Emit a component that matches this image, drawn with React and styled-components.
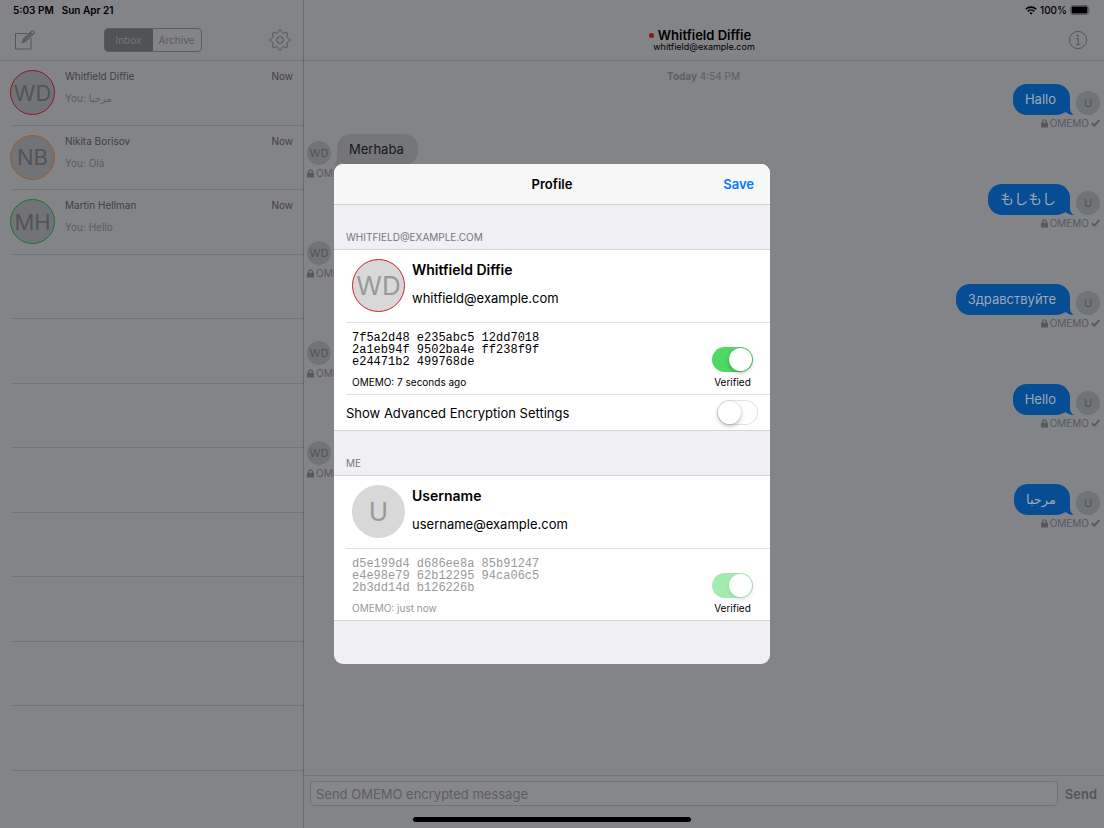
import React from "react";
import styled, { createGlobalStyle, css } from "styled-components";

const sans = `Inter, "Noto Sans CJK JP", "DejaVu Sans", sans-serif`;

const GlobalStyle = createGlobalStyle`
  * { box-sizing: border-box; }
  html, body { height: 100%; margin: 0; }
  #root { height: 100%; }
  body { font-family: ${sans}; background: #838488; color: #000; overflow: hidden; }
  button, input { font-family: inherit; }
  button { border: 0; padding: 0; background: none; cursor: pointer; }
  h1, h2, h3, p, ul, ol { margin: 0; padding: 0; }
  ul, ol { list-style: none; }
`;

const Screen = styled.div`
  position: relative;
  display: flex;
  height: 100%;
  min-height: 700px;
`;

const Sidebar = styled.aside`
  flex: none;
  display: flex;
  flex-direction: column;
  width: 304px;
  border-right: 1px solid #6a6b6f;
`;

const Conversation = styled.main`
  flex: 1;
  min-width: 0;
  display: flex;
  flex-direction: column;
`;

const PaneHeader = styled.header`
  height: 61px;
  border-bottom: 1px solid #737478;
`;

const StatusStrip = styled.div`
  display: flex;
  align-items: center;
  justify-content: ${(p) => p.$align};
  gap: ${(p) => p.$gap};
  height: 20px;
  padding: 0 13px;
  font-size: 10px;
  font-weight: 600;
  line-height: 20px;

  svg { display: block; }
`;

const BatteryLevel = styled.span`
  font-weight: 500;
`;

const NavRow = styled.div`
  display: grid;
  grid-template-columns: 32px 1fr 32px;
  align-items: center;
  height: 40px;
  padding: ${(p) => p.$pad};
`;

const IconButton = styled.button`
  display: flex;
  align-items: center;
  justify-content: center;
  height: 32px;
  color: #55565a;
`;

const Segmented = styled.div`
  justify-self: center;
  display: grid;
  grid-template-columns: 1fr 1fr;
  width: 98px;
  height: 24px;
  border: 1px solid #5a5b5f;
  border-radius: 4px;
  overflow: hidden;
`;

const Segment = styled.button`
  font-size: 10px;
  color: ${(p) => (p.$active ? "#737478" : "#5a5b5f")};
  background: ${(p) => (p.$active ? "#515256" : "transparent")};
`;

const ChatList = styled.ul`
  flex: 1;
  display: grid;
  grid-auto-rows: 1fr;
  padding-bottom: 57px;
`;

const ChatRow = styled.li`
  display: flex;
  gap: 10px;
  margin-left: 10px;
  padding-top: 9px;
  background: linear-gradient(#747579, #747579) 2px 100% / 100% 1px no-repeat;
`;

const avatarSizes = {
  small: css`width: 24px; height: 24px; font-size: 11px;`,
  medium: css`width: 45px; height: 45px; font-size: 22px;`,
  large: css`width: 53px; height: 53px; font-size: 26px;`,
};

const Avatar = styled.span`
  flex: none;
  display: flex;
  align-items: center;
  justify-content: center;
  border-radius: 50%;
  border: ${(p) => (p.$ring ? `1px solid ${p.$ring}` : "0")};
  background: ${(p) => (p.$lit ? "#d8d8d8" : "#727377")};
  color: ${(p) => (p.$lit ? "#999" : "#535458")};
  ${(p) => avatarSizes[p.$size]}
`;

const ChatText = styled.div`
  flex: 1;
  display: grid;
  grid-template-columns: 1fr auto;
  align-content: start;
  row-gap: 10px;
  padding-right: 10px;
  font-size: 10px;
  line-height: 12px;
  color: #5b5c60;
`;

const ChatName = styled.span`
  color: #3f4044;
`;

const TitleBlock = styled.div`
  display: flex;
  flex-direction: column;
  align-items: center;
`;

const ChatTitle = styled.h1`
  display: flex;
  align-items: center;
  gap: 4px;
  padding-right: 8px;
  font-size: 13px;
  font-weight: 600;
  line-height: 14px;
`;

const Presence = styled.span`
  width: 5px;
  height: 5px;
  border-radius: 50%;
  background: #8f1318;
`;

const ChatSubtitle = styled.p`
  font-size: 9px;
  line-height: 10px;
`;

const Thread = styled.section`
  flex: 1;
  padding: 8px 4px 0 3px;
`;

const DateLine = styled.p`
  height: 15px;
  font-size: 10px;
  line-height: 14px;
  text-align: center;
  color: #5e5f63;
`;

const Message = styled.li`
  display: grid;
  justify-items: ${(p) => (p.$mine ? "end" : "start")};
  grid-template-rows: 31px 19px;
`;

const MessageLine = styled.div`
  display: flex;
  flex-direction: ${(p) => (p.$mine ? "row-reverse" : "row")};
  align-items: flex-end;
  gap: 6px;
`;

const Bubble = styled.p`
  position: relative;
  height: 31px;
  padding: 0 14px 0 12px;
  border-radius: 14px;
  font-size: 13px;
  line-height: 30px;
  color: ${(p) => (p.$mine ? "#9fa9b5" : "#17181b")};
  background: ${(p) => (p.$mine ? "#074d94" : "#747579")};

  &:lang(ja) { font-size: 14px; }
`;

const Tail = styled.svg`
  position: absolute;
  bottom: 0;
  ${(p) => (p.$mine ? "right: -4px;" : "left: -4px; transform: scaleX(-1);")}
  fill: ${(p) => (p.$mine ? "#074d94" : "#747579")};
`;

const Delivery = styled.span`
  display: flex;
  align-items: center;
  gap: 2px;
  height: 16px;
  font-size: 10px;
  color: #58595d;
`;

const Composer = styled.form`
  display: flex;
  align-items: flex-start;
  gap: 7px;
  height: 53px;
  padding: 5px 7px 0 6px;
  border-top: 1px solid #747579;
`;

const MessageField = styled.input`
  flex: 1;
  min-width: 0;
  height: 25px;
  padding: 0 5px;
  border: 1px solid #717276;
  border-radius: 4px;
  background: #86878b;
  font-size: 13px;

  &::placeholder { color: #5d5e62; opacity: 1; }
`;

const SendButton = styled.button`
  height: 25px;
  font-size: 13px;
  font-weight: 600;
  color: #545559;
`;

const HomeIndicator = styled.div`
  position: absolute;
  bottom: 6px;
  left: 50%;
  width: 278px;
  height: 5px;
  margin-left: -139px;
  border-radius: 3px;
  background: #000;
`;

const Backdrop = styled.div`
  position: absolute;
  inset: 0;
  display: flex;
  align-items: center;
  justify-content: center;
`;

const Sheet = styled.section`
  width: 436px;
  padding-bottom: 43px;
  border-radius: 9px;
  background: #efeff4;
  overflow: hidden;
`;

const SheetBar = styled.header`
  display: grid;
  grid-template-columns: 1fr auto 1fr;
  align-items: center;
  height: 41px;
  padding: 0 16px;
  border-bottom: 1px solid #cfcfd3;
  background: #f7f7f8;
`;

const SheetTitle = styled.h2`
  grid-column: 2;
  font-size: 13px;
  font-weight: 600;
`;

const SaveButton = styled.button`
  justify-self: end;
  font-size: 13px;
  font-weight: 600;
  color: #007aff;
`;

const SectionLabel = styled.h3`
  padding: 25px 12px 4px;
  font-size: 10px;
  font-weight: 400;
  line-height: 15px;
  color: #77777c;
`;

const Group = styled.div`
  padding-left: 12px;
  border-top: 1px solid #d5d5d9;
  border-bottom: 1px solid #d5d5d9;
  background: #fff;
`;

const Cell = styled.div`
  display: flex;
  align-items: ${(p) => p.$align || "center"};
  justify-content: ${(p) => (p.$spread ? "space-between" : "flex-start")};
  gap: 7px;
  height: ${(p) => p.$height};
  padding: ${(p) => p.$pad};

  & + & { border-top: 1px solid #e2e2e4; }
`;

const Identity = styled.div`
  padding-bottom: 2px;
  font-size: 13px;
  line-height: 28px;
`;

const IdentityName = styled.p`
  font-size: 14px;
  font-weight: 600;
`;

const KeyInfo = styled.div`
  color: ${(p) => (p.$dim ? "#999" : "#000")};
`;

const Fingerprint = styled.p`
  font-family: "Liberation Mono", monospace;
  font-size: 12px;
  line-height: 12px;
  white-space: pre-line;
`;

const KeyAge = styled.p`
  margin-top: 7px;
  font-size: 10px;
  line-height: 14px;
`;

const VerifiedLabel = styled.label`
  display: flex;
  flex-direction: column;
  align-items: center;
  gap: 3px;
  padding-top: 15px;
  font-size: 10px;
  line-height: 14px;
`;

const AdvancedLabel = styled.label`
  font-size: 13px;
`;

const Switch = styled.input.attrs({ type: "checkbox", role: "switch" })`
  appearance: none;
  flex: none;
  display: flex;
  align-items: center;
  width: 41px;
  height: 25px;
  margin: 0;
  padding: 0 1px;
  border-radius: 13px;
  background: #fff;
  box-shadow: inset 0 0 0 1px #e2e2e2;

  &::before {
    content: "";
    width: 23px;
    height: 23px;
    border-radius: 50%;
    background: #fff;
    box-shadow: 0 2px 4px rgba(0, 0, 0, 0.25), 0 0 1px rgba(0, 0, 0, 0.2);
  }

  &:checked {
    justify-content: flex-end;
    background: #4cd964;
    box-shadow: none;
  }

  &:disabled { opacity: 0.5; }
`;

const ComposeIcon = () => (
  <svg width="20" height="20" viewBox="0 0 20 20" fill="none" stroke="currentColor" strokeWidth="1">
    <path d="M12.5 3.500h-12v15.500h15.500V8" />
    <path d="M7.200 12.700l1.100-3.400L16.700 1.100q.6-.6 1.200 0l1 1q.6.6 0 1.200L10.500 11.600z M15.300 2.500l2.200 2.200 M8.300 9.300l2.200 2.300 M9.400 10.500l7-7" strokeWidth="1.100" />
  </svg>
);

const gearPath = (() => {
  const teeth = 8;
  const step = (2 * Math.PI) / teeth;
  const at = (r, a) => `${(11 + r * Math.cos(a)).toFixed(2)} ${(11 + r * Math.sin(a)).toFixed(2)}`;
  const parts = [];
  for (let i = 0; i < teeth; i += 1) {
    const a = i * step - Math.PI / 2;
    parts.push(`${i ? "L" : "M"}${at(8.6, a - 0.17)} L${at(9.9, a - 0.12)} Q${at(10.5, a)} ${at(9.9, a + 0.12)} L${at(8.6, a + 0.17)}`);
    parts.push(`C${at(7.3, a + 0.24)} ${at(7.3, a + step - 0.24)} ${at(8.6, a + step - 0.17)}`);
  }
  return `${parts.join(" ")}Z`;
})();

const GearIcon = () => (
  <svg width="22" height="22" viewBox="0 0 22 22" fill="none" stroke="currentColor" strokeWidth="1" strokeLinejoin="round">
    <path d={gearPath} />
    <circle cx="11" cy="11" r="3.300" />
  </svg>
);

const InfoIcon = () => (
  <svg width="20" height="20" viewBox="0 0 20 20" fill="none" stroke="currentColor" strokeWidth="1">
    <circle cx="10" cy="10" r="8.600" />
    <circle cx="9.800" cy="5.700" r="1.100" fill="currentColor" stroke="none" />
    <path d="M8.200 8.500h2v6" strokeWidth="1.200" />
    <path d="M7.900 14.600h4.400" />
  </svg>
);

const WifiIcon = () => (
  <svg width="12" height="9" viewBox="0 0 12 9" fill="none" stroke="#000" strokeWidth="1.600">
    <path d="M.7 3.300a7.600 7.600 0 0 1 10.600 0" />
    <path d="M2.700 5.400a4.700 4.700 0 0 1 6.600 0" />
    <path d="M6 8.700L4.300 7a2.400 2.400 0 0 1 3.400 0z" fill="#000" stroke="none" />
  </svg>
);

const BatteryIcon = () => (
  <svg width="21" height="10" viewBox="0 0 21 10">
    <rect x=".5" y=".5" width="18" height="9" rx="2.200" fill="none" stroke="#5c5d61" />
    <rect x="1.600" y="1.600" width="15.800" height="6.800" rx="1" />
    <path d="M19.500 3.400q1.300 1.600 0 3.200z" fill="#535458" />
  </svg>
);

const LockIcon = () => (
  <svg width="7" height="9" viewBox="0 0 7 9">
    <rect y="3.800" width="7" height="4.800" rx=".6" fill="currentColor" />
    <path d="M1.600 4V2.800a1.900 1.900 0 0 1 3.800 0V4" fill="none" stroke="currentColor" strokeWidth="1.200" />
  </svg>
);

const CheckIcon = () => (
  <svg width="9" height="8" viewBox="0 0 9 8" fill="none" stroke="currentColor" strokeWidth="1.900">
    <path d="M.8 4.200l2.500 2.400L8.300 1.200" />
  </svg>
);

const chats = [
  { initials: "WD", name: "Whitfield Diffie", last: "مرحبا", ring: "#8c1a20" },
  { initials: "NB", name: "Nikita Borisov", last: "Olá", ring: "#9c5a2c" },
  { initials: "MH", name: "Martin Hellman", last: "Hello", ring: "#12782b" },
];
const emptyRows = Array.from({ length: 8 }, (_, i) => i);

const messages = [
  { mine: true, text: "Hallo" },
  { mine: false, text: "Merhaba" },
  { mine: true, text: "もしもし", lang: "ja" },
  { mine: false, text: "Merhaba" },
  { mine: true, text: "Здравствуйте", lang: "ru" },
  { mine: false, text: "Hello" },
  { mine: true, text: "Hello" },
  { mine: false, text: "Hello" },
  { mine: true, text: "مرحبا", lang: "ar" },
];

function ThreadMessage({ mine, text, lang }) {
  return (
    <Message $mine={mine}>
      <MessageLine $mine={mine}>
        <Avatar $size="small">{mine ? "U" : "WD"}</Avatar>
        <Bubble $mine={mine} lang={lang}>
          {text}
          <Tail $mine={mine} width="14" height="14" viewBox="0 0 14 14">
            <path d="M0 12Q4 12.500 5.500 11Q9 14 14 14Q10 11.500 10 7.500V0H4Z" />
          </Tail>
        </Bubble>
      </MessageLine>
      <Delivery>
        <LockIcon /> OMEMO {mine && <CheckIcon />}
      </Delivery>
    </Message>
  );
}

function Account({ initials, ring, name, address, fingerprint, age, own }) {
  return (
    <>
      <Cell $height="72px" $pad="0 6px 2px">
        <Avatar $size="large" $lit $ring={ring}>{initials}</Avatar>
        <Identity>
          <IdentityName>{name}</IdentityName>
          <p>{address}</p>
        </Identity>
      </Cell>
      <Cell $height="72px" $pad="9px 17px 0 6px" $align="flex-start" $spread>
        <KeyInfo $dim={own}>
          <Fingerprint>{fingerprint}</Fingerprint>
          <KeyAge>{age}</KeyAge>
        </KeyInfo>
        <VerifiedLabel>
          <Switch defaultChecked disabled={own} />
          Verified
        </VerifiedLabel>
      </Cell>
    </>
  );
}

export default function App() {
  return (
    <Screen>
      <GlobalStyle />
      <Sidebar>
        <PaneHeader>
          <StatusStrip $align="flex-start" $gap="8px">
            <span>5:03 PM</span>
            <span>Sun Apr 21</span>
          </StatusStrip>
          <NavRow $pad="0 7px 0 9px">
            <IconButton aria-label="Compose"><ComposeIcon /></IconButton>
            <Segmented>
              <Segment $active>Inbox</Segment>
              <Segment>Archive</Segment>
            </Segmented>
            <IconButton aria-label="Settings"><GearIcon /></IconButton>
          </NavRow>
        </PaneHeader>
        <ChatList>
          {chats.map((chat) => (
            <ChatRow key={chat.name}>
              <Avatar $size="medium" $ring={chat.ring}>{chat.initials}</Avatar>
              <ChatText>
                <ChatName>{chat.name}</ChatName>
                <ChatName>Now</ChatName>
                <span>You: {chat.last}</span>
              </ChatText>
            </ChatRow>
          ))}
          {emptyRows.map((row) => <ChatRow key={row} />)}
        </ChatList>
      </Sidebar>

      <Conversation>
        <PaneHeader>
          <StatusStrip $align="flex-end" $gap="3px">
            <WifiIcon />
            <BatteryLevel>100%</BatteryLevel>
            <BatteryIcon />
          </StatusStrip>
          <NavRow $pad="0 10px">
            <span />
            <TitleBlock>
              <ChatTitle><Presence />Whitfield Diffie</ChatTitle>
              <ChatSubtitle>whitfield@example.com</ChatSubtitle>
            </TitleBlock>
            <IconButton aria-label="Info"><InfoIcon /></IconButton>
          </NavRow>
        </PaneHeader>
        <Thread>
          <DateLine><b>Today</b> 4:54 PM</DateLine>
          <ol>
            {messages.map((message, i) => <ThreadMessage key={i} {...message} />)}
          </ol>
        </Thread>
        <Composer onSubmit={(e) => e.preventDefault()}>
          <MessageField aria-label="Message" placeholder="Send OMEMO encrypted message" />
          <SendButton>Send</SendButton>
        </Composer>
      </Conversation>

      <Backdrop>
        <Sheet role="dialog" aria-labelledby="sheet-title">
          <SheetBar>
            <SheetTitle id="sheet-title">Profile</SheetTitle>
            <SaveButton>Save</SaveButton>
          </SheetBar>
          <SectionLabel>WHITFIELD@EXAMPLE.COM</SectionLabel>
          <Group>
            <Account
              initials="WD"
              ring="#c8232c"
              name="Whitfield Diffie"
              address="whitfield@example.com"
              fingerprint={"7f5a2d48 e235abc5 12dd7018\n2a1eb94f 9502ba4e ff238f9f\ne24471b2 499768de"}
              age="OMEMO: 7 seconds ago"
            />
            <Cell $height="36px" $pad="0 12px 0 0" $spread>
              <AdvancedLabel htmlFor="advanced">Show Advanced Encryption Settings</AdvancedLabel>
              <Switch id="advanced" />
            </Cell>
          </Group>
          <SectionLabel>ME</SectionLabel>
          <Group>
            <Account
              own
              initials="U"
              name="Username"
              address="username@example.com"
              fingerprint={"d5e199d4 d686ee8a 85b91247\ne4e98e79 62b12295 94ca06c5\n2b3dd14d b126226b"}
              age="OMEMO: just now"
            />
          </Group>
        </Sheet>
      </Backdrop>
      <HomeIndicator />
    </Screen>
  );
}
